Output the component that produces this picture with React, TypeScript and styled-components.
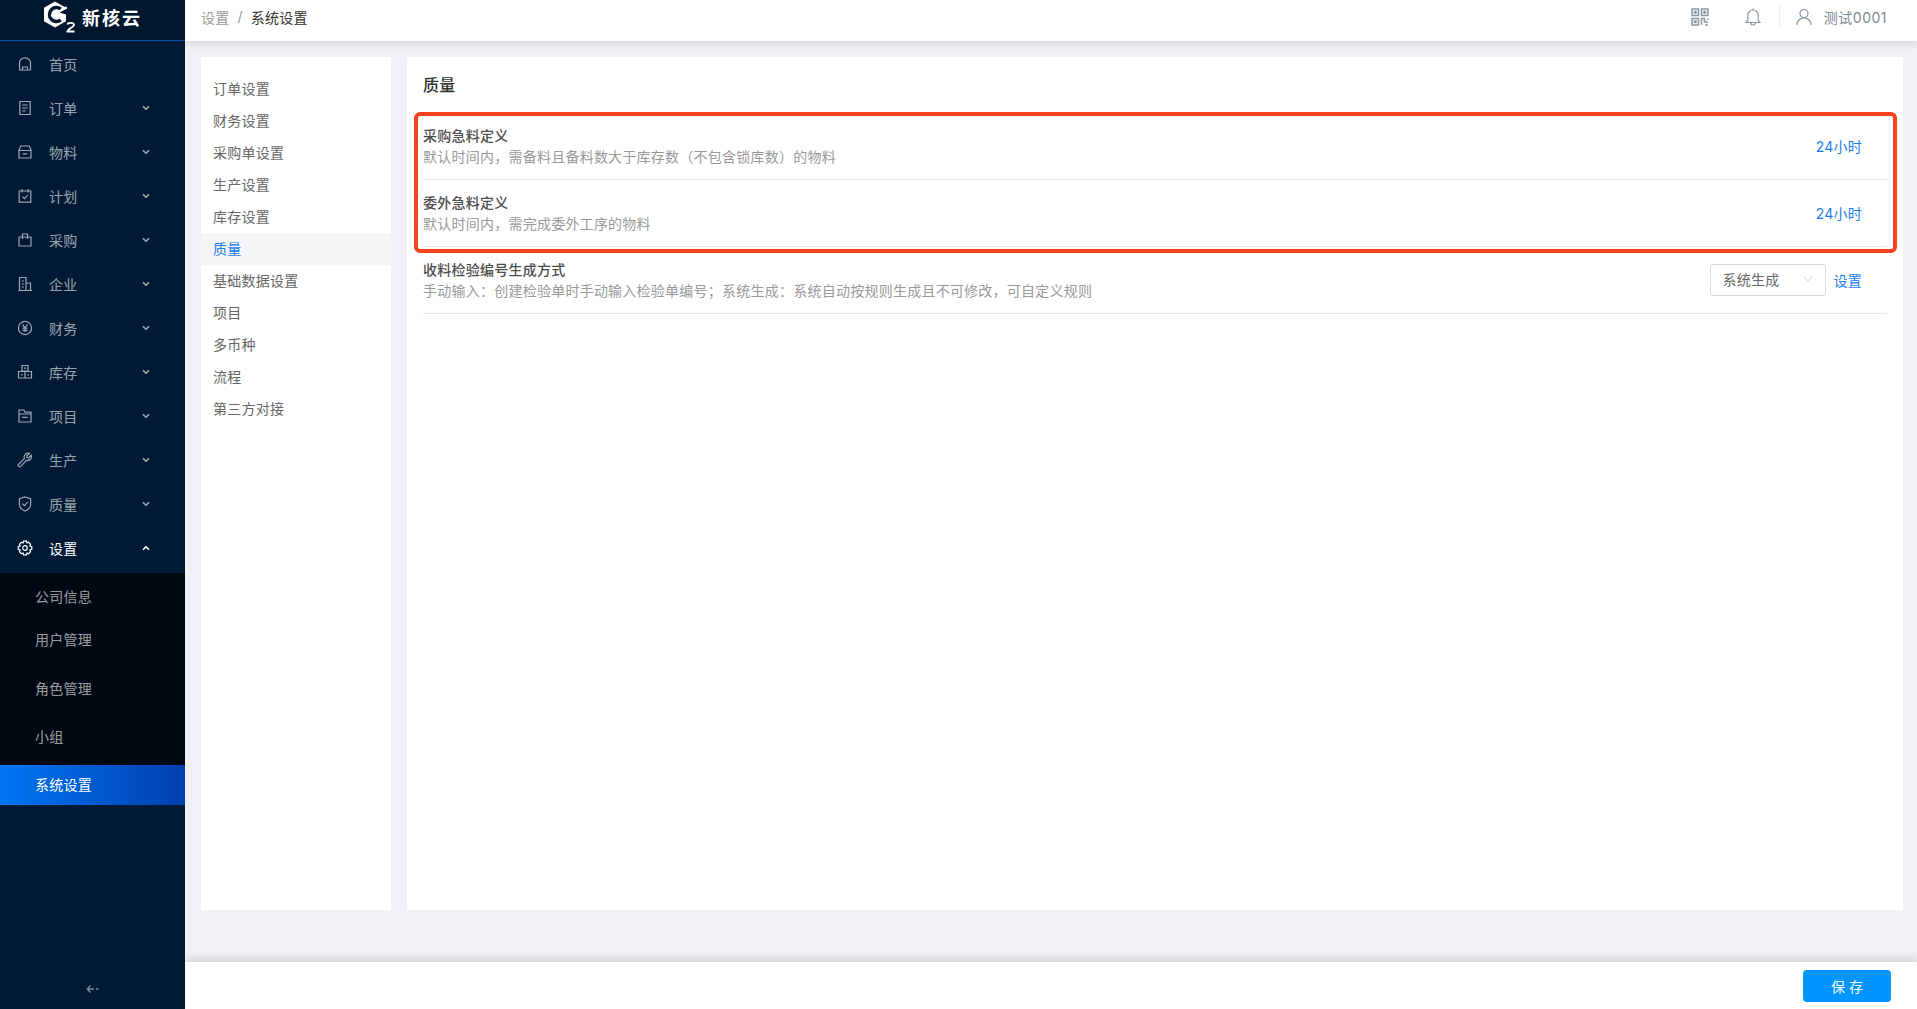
import React from 'react';
import styled, { createGlobalStyle } from 'styled-components';
import { ChevronDown, ChevronUp } from 'lucide-react';

const GlobalStyle = createGlobalStyle`
  html, body {
    margin: 0;
    padding: 0;
    height: 100%;
    overflow: hidden;
  }
  body {
    font-family: Inter, "Noto Sans CJK SC", "Noto Sans", sans-serif;
    font-size: 14px;
    letter-spacing: 0.24px;
    color: #333;
  }
  * {
    box-sizing: border-box;
  }
`;

const Page = styled.div`
  display: flex;
  width: 1917px;
  height: 1009px;
  background: #f0f1f5;
`;

const Sidebar = styled.aside`
  width: 185px;
  flex-shrink: 0;
  display: flex;
  flex-direction: column;
  background: #001a35;
`;

const LogoBar = styled.div`
  height: 41px;
  flex-shrink: 0;
  display: flex;
  align-items: center;
  gap: 6px;
  padding: 0 0 6px 44px;
  background: #001730;
  border-bottom: 1px solid #0050b0;
`;

const LogoText = styled.span`
  font-size: 18px;
  font-weight: 700;
  color: #fff;
  letter-spacing: 2px;
`;

const MainMenu = styled.nav`
  flex: 1;
  padding-top: 2px;
`;

const MenuRow = styled.div<{ $open?: boolean }>`
  height: 44px;
  display: flex;
  align-items: center;
  padding: 0 34px 2px 17px;
  color: ${({ $open }) => ($open ? '#ffffff' : 'rgba(255, 255, 255, 0.62)')};
`;

const MenuIcon = styled.svg`
  width: 16px;
  height: 16px;
  flex-shrink: 0;
  margin-right: 16px;
  fill: none;
  stroke: currentColor;
  stroke-width: 1.2;
`;

const MenuLabel = styled.span`
  flex: 1;
`;

const SubMenu = styled.div`
  margin-top: 2px;
  padding-top: 4px;
  background: #000812;
`;

const SubRow = styled.div<{ $after: number; $active?: boolean }>`
  height: 40px;
  margin-bottom: ${({ $after }) => $after}px;
  display: flex;
  align-items: center;
  padding: 0 0 3px 35px;
  color: ${({ $active }) => ($active ? '#fff' : 'rgba(255, 255, 255, 0.62)')};
  background: ${({ $active }) =>
    $active ? 'linear-gradient(90deg, #0076f5 0%, #003fae 100%)' : 'transparent'};
`;

const CollapseBar = styled.div`
  height: 40px;
  display: flex;
  align-items: center;
  justify-content: center;
  color: rgba(255, 255, 255, 0.5);
`;

const Main = styled.div`
  flex: 1;
  min-width: 0;
  display: flex;
  flex-direction: column;
`;

const TopBar = styled.header`
  height: 41px;
  flex-shrink: 0;
  display: flex;
  align-items: center;
  padding: 0 30px 8px 16px;
  background: #fff;
  box-shadow: 0 2px 8px rgba(0, 21, 41, 0.14);
  position: relative;
  z-index: 1;
`;

const Crumb = styled.span<{ $current?: boolean }>`
  color: ${({ $current }) => ($current ? '#333' : '#999')};
`;

const CrumbSep = styled.span`
  color: #999;
  margin: 0 8px;
`;

const TopActions = styled.div`
  margin-left: auto;
  display: flex;
  align-items: center;
  color: #8c96a3;
`;

const TopIcon = styled.svg<{ $gap: number }>`
  width: 18px;
  height: 18px;
  margin-right: ${({ $gap }) => $gap}px;
  fill: none;
  stroke: currentColor;
  stroke-width: 1.2;
`;

const TopDivider = styled.span`
  width: 1px;
  height: 24px;
  background: #eee;
  margin-right: 15px;
`;

const UserName = styled.span`
  color: #7d8793;
  letter-spacing: 0.5px;
`;

const Content = styled.div`
  flex: 1;
  min-height: 0;
  display: flex;
  gap: 16px;
  padding: 16px 14px 99px 16px;
`;

const SettingsNav = styled.div`
  width: 190px;
  flex-shrink: 0;
  padding-top: 16px;
  background: #fff;
`;

const NavItem = styled.div<{ $active?: boolean }>`
  height: 32px;
  display: flex;
  align-items: center;
  padding: 0 0 2px 12px;
  color: ${({ $active }) => ($active ? '#1a7cf0' : '#666')};
  background: ${({ $active }) => ($active ? '#f4f5f6' : 'transparent')};
`;

const Panel = styled.section`
  flex: 1;
  min-width: 0;
  position: relative;
  padding: 16px 16px 0;
  background: #fff;
`;

const PanelTitle = styled.h2`
  margin: 0;
  height: 24px;
  line-height: 24px;
  font-size: 16px;
  font-weight: 500;
  color: #333;
`;

const RowList = styled.div`
  margin-top: 16px;
`;

const SettingRow = styled.div`
  height: 67px;
  display: flex;
  align-items: center;
  padding-right: 25px;
  border-bottom: 1px solid #e8e8e8;
`;

const RowText = styled.div`
  flex: 1;
  min-width: 0;
  margin-top: -1px;
`;

const RowTitle = styled.div`
  height: 21px;
  line-height: 21px;
  font-weight: 500;
  color: #4d4d4d;
`;

const RowDesc = styled.div`
  height: 21px;
  line-height: 21px;
  color: #999;
`;

const LinkText = styled.span`
  color: #1a7cf0;
`;

const SelectBox = styled.div`
  width: 116px;
  height: 32px;
  display: flex;
  align-items: center;
  justify-content: space-between;
  margin-right: 8px;
  padding: 0 9px 2px 12px;
  color: #666;
  border: 1px solid #d9d9d9;
  border-radius: 4px;
`;

const Highlight = styled.div`
  position: absolute;
  left: 7px;
  top: 55px;
  width: 1483px;
  height: 141px;
  border: 4px solid #f3431f;
  border-radius: 6px;
  pointer-events: none;
`;

const Footer = styled.footer`
  position: fixed;
  left: 185px;
  right: 0;
  bottom: 0;
  height: 47px;
  display: flex;
  align-items: center;
  justify-content: flex-end;
  padding-right: 26px;
  background: #fff;
  box-shadow: 0 -2px 8px rgba(0, 21, 41, 0.18);
`;

const SaveButton = styled.button`
  width: 88px;
  height: 32px;
  margin-top: 1px;
  padding: 0 0 0 4px;
  border: 0;
  border-radius: 4px;
  font: inherit;
  color: #fff;
  letter-spacing: 4px;
  background: #0095ff;
`;

const menuIcons: Record<string, React.ReactNode> = {
  home: <path d="M2.5 14V6.5C2.5 4 5 1.8 8 1.8S13.5 4 13.5 6.5V14ZM5.5 14V11H10.5V14" />,
  order: <path d="M2.8 1.5H13.2V14.5H2.8ZM5.3 5H10.7M5.3 8H10.7M5.3 11H8.6" />,
  goods: <path d="M3.8 2H12.2L14 6V14H2V6ZM2 6.5H14M5.8 9.8H10.2" />,
  plan: <path d="M2.2 3H13.8V14.2H2.2ZM5 1V4.4M11 1V4.4M5.4 8.6L7.4 10.6L10.8 7.2" />,
  buy: <path d="M2 5H14V14H2ZM5.5 7V2H10.5V7" />,
  company: <path d="M1 14.5H15M2.5 14.5V1.5H9V14.5M9 7H13.5V14.5M4.8 5H6.8M4.8 8H6.8M4.8 11H6.8" />,
  finance: (
    <>
      <circle cx="8" cy="8" r="6.6" />
      <path d="M5.6 4.6L8 7.8L10.4 4.6M5.4 8.2H10.6M5.4 10.4H10.6M8 7.8V12" />
    </>
  ),
  stock: <path d="M5 1.5H11V7H5ZM1.5 7.5H8V14H1.5ZM8 7.5H14.5V14H8ZM7 4.2H9M4 10.8H5.6M10.4 10.8H12" />,
  project: <path d="M2 2H7L8 4.2H14V14H2ZM2 6H14M5.2 9.4H10.8" />,
  tool: <path d="M14.2 3.2L11.6 5.8L10 5.4L9.8 3.8L12.4 1.4A4 4 0 0 0 7.4 6.6L1.6 12.2A1.5 1.5 0 0 0 3.8 14.4L9.4 8.4A4 4 0 0 0 14.2 3.2Z" />,
  shield: <path d="M2.4 2.8L8 1L13.6 2.8V8.4C13.6 11.6 10.6 13.8 8 15C5.4 13.8 2.4 11.6 2.4 8.4ZM5.4 7.6L7.4 9.6L10.8 6.2" />,
  gear: (
    <>
      <circle cx="8" cy="8" r="2.3" />
      <path d="M6.6 1.2H9.4L9.9 3L11.6 2.3L13.6 4.3L12.8 6L14.8 6.6V9.4L12.8 10L13.6 11.7L11.6 13.7L9.9 13L9.4 14.8H6.6L6.1 13L4.4 13.7L2.4 11.7L3.2 10L1.2 9.4V6.6L3.2 6L2.4 4.3L4.4 2.3L6.1 3Z" />
    </>
  ),
};

const menuItems = [
  { label: '首页', icon: 'home', plain: true },
  { label: '订单', icon: 'order' },
  { label: '物料', icon: 'goods' },
  { label: '计划', icon: 'plan' },
  { label: '采购', icon: 'buy' },
  { label: '企业', icon: 'company' },
  { label: '财务', icon: 'finance' },
  { label: '库存', icon: 'stock' },
  { label: '项目', icon: 'project' },
  { label: '生产', icon: 'tool' },
  { label: '质量', icon: 'shield' },
];

const subItems = [
  { label: '公司信息', after: 3 },
  { label: '用户管理', after: 9 },
  { label: '角色管理', after: 8 },
  { label: '小组', after: 8 },
  { label: '系统设置', after: 4, active: true },
];

const settingsNav = [
  '订单设置',
  '财务设置',
  '采购单设置',
  '生产设置',
  '库存设置',
  '质量',
  '基础数据设置',
  '项目',
  '多币种',
  '流程',
  '第三方对接',
];

const Logo = () => (
  <svg width="32" height="32" viewBox="0 0 32 32" fill="none">
    <path d="M11 0.5L22 6.8V20.2L11 26.5L0 20.2V6.8Z" fill="#fff" />
    <path d="M16.8 8A7 7 0 1 0 16.8 19" stroke="#001730" strokeWidth="3.4" />
    <path d="M7.5 15.5L23 6.5" stroke="#fff" strokeWidth="3" />
    <path d="M17 3.5L24 0V6Z" fill="#001730" />
    <path d="M15.5 11.5L24 7V14Z" fill="#001730" />
    <path d="M23.5 23.5C24 21.3 30 21.3 30 24C30 26 24 27.5 23.5 30.5H30.5" stroke="#fff" strokeWidth="1.9" />
  </svg>
);

export default function App() {
  return (
    <>
      <GlobalStyle />
      <Page>
        <Sidebar>
          <LogoBar>
            <Logo />
            <LogoText>新核云</LogoText>
          </LogoBar>
          <MainMenu>
            {menuItems.map((item) => (
              <MenuRow key={item.label}>
                <MenuIcon viewBox="0 0 16 16">{menuIcons[item.icon]}</MenuIcon>
                <MenuLabel>{item.label}</MenuLabel>
                {!item.plain && <ChevronDown size={10} strokeWidth={4} />}
              </MenuRow>
            ))}
            <MenuRow $open>
              <MenuIcon viewBox="0 0 16 16">{menuIcons.gear}</MenuIcon>
              <MenuLabel>设置</MenuLabel>
              <ChevronUp size={10} strokeWidth={4} />
            </MenuRow>
            <SubMenu>
              {subItems.map((item) => (
                <SubRow key={item.label} $after={item.after} $active={item.active}>
                  {item.label}
                </SubRow>
              ))}
            </SubMenu>
          </MainMenu>
          <CollapseBar>
            <svg width="14" height="10" viewBox="0 0 14 10" fill="none" stroke="currentColor" strokeWidth="1.3">
              <path d="M4.5 1.5L1.2 5L4.5 8.5M1.2 5H8M10 5H12.5" />
            </svg>
          </CollapseBar>
        </Sidebar>
        <Main>
          <TopBar>
            <Crumb>设置</Crumb>
            <CrumbSep>/</CrumbSep>
            <Crumb $current>系统设置</Crumb>
            <TopActions>
              <TopIcon $gap={35} viewBox="0 0 18 18">
                <path d="M1 1H7.5V7.5H1ZM10.5 1H17V7.5H10.5ZM1 10.5H7.5V17H1ZM3.5 3.5H5V5H3.5ZM13 3.5H14.5V5H13ZM3.5 13H5V14.5H3.5ZM10.5 17V10.5H13.5V14H17M17 10.5V12M14 17H17" strokeWidth="1.5" />
              </TopIcon>
              <TopIcon $gap={17} viewBox="0 0 18 18">
                <path d="M2 14.5H16L14.2 12V7.2A5.2 5.2 0 0 0 3.8 7.2V12ZM9 2V0.5M6.8 14.8A2.2 2.2 0 0 0 11.2 14.8" />
              </TopIcon>
              <TopDivider />
              <TopIcon $gap={11} viewBox="0 0 18 18">
                <circle cx="9" cy="5.5" r="4" />
                <path d="M1.8 17C2.4 12.8 5 9.8 9 9.8S15.6 12.8 16.2 17" />
              </TopIcon>
              <UserName>测试0001</UserName>
            </TopActions>
          </TopBar>
          <Content>
            <SettingsNav>
              {settingsNav.map((label) => (
                <NavItem key={label} $active={label === '质量'}>
                  {label}
                </NavItem>
              ))}
            </SettingsNav>
            <Panel>
              <PanelTitle>质量</PanelTitle>
              <RowList>
                <SettingRow>
                  <RowText>
                    <RowTitle>采购急料定义</RowTitle>
                    <RowDesc>默认时间内，需备料且备料数大于库存数（不包含锁库数）的物料</RowDesc>
                  </RowText>
                  <LinkText>24小时</LinkText>
                </SettingRow>
                <SettingRow>
                  <RowText>
                    <RowTitle>委外急料定义</RowTitle>
                    <RowDesc>默认时间内，需完成委外工序的物料</RowDesc>
                  </RowText>
                  <LinkText>24小时</LinkText>
                </SettingRow>
                <SettingRow>
                  <RowText>
                    <RowTitle>收料检验编号生成方式</RowTitle>
                    <RowDesc>手动输入：创建检验单时手动输入检验单编号；系统生成：系统自动按规则生成且不可修改，可自定义规则</RowDesc>
                  </RowText>
                  <SelectBox>
                    系统生成
                    <ChevronDown size={16} strokeWidth={1} color="#bbb" />
                  </SelectBox>
                  <LinkText>设置</LinkText>
                </SettingRow>
              </RowList>
              <Highlight />
            </Panel>
          </Content>
        </Main>
        <Footer>
          <SaveButton>保存</SaveButton>
        </Footer>
      </Page>
    </>
  );
}
